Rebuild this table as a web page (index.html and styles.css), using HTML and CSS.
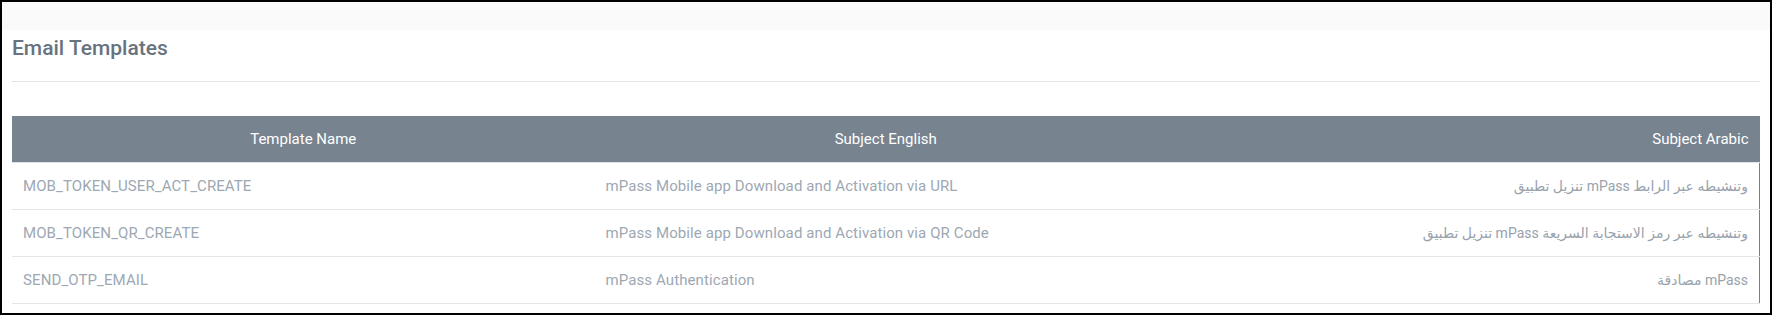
FILE: index.html
```html
<!DOCTYPE html>
<html lang="en">
<head>
<meta charset="utf-8">
<title>Email Templates</title>
<link rel="stylesheet" href="styles.css">
</head>
<body>
<div class="frame">
  <div class="topbar"></div>
  <div class="content">
    <h1 class="title">Email Templates</h1>
    <div class="divider"></div>
    <table class="grid">
      <thead>
        <tr>
          <th>Template Name</th>
          <th>Subject English</th>
          <th class="ar-head">Subject Arabic</th>
        </tr>
      </thead>
      <tbody>
        <tr>
          <td>MOB_TOKEN_USER_ACT_CREATE</td>
          <td>mPass Mobile app Download and Activation via URL</td>
          <td class="ar">تنزيل تطبيق mPass وتنشيطه عبر الرابط</td>
        </tr>
        <tr>
          <td>MOB_TOKEN_QR_CREATE</td>
          <td>mPass Mobile app Download and Activation via QR Code</td>
          <td class="ar">تنزيل تطبيق mPass وتنشيطه عبر رمز الاستجابة السريعة</td>
        </tr>
        <tr>
          <td>SEND_OTP_EMAIL</td>
          <td>mPass Authentication</td>
          <td class="ar">مصادقة mPass</td>
        </tr>
      </tbody>
    </table>
  </div>
</div>
</body>
</html>
```

FILE: styles.css
```css
html, body {
  margin: 0;
  padding: 0;
  background: #ffffff;
}

body {
  font-family: Roboto, "Noto Sans", "DejaVu Sans", sans-serif;
}

.frame {
  box-sizing: border-box;
  width: 1772px;
  height: 315px;
  border: 2px solid #000000;
  background: #ffffff;
  overflow: hidden;
}

.topbar {
  height: 28px;
  background: #fafafa;
}

.content {
  padding: 0 10px;
}

.title {
  margin: 6px 0 0;
  font-size: 21px;
  line-height: 24px;
  font-weight: 500;
  color: #67737f;
}

.divider {
  margin-top: 21px;
  border-top: 1px solid #e4e4e4;
}

.grid {
  width: 100%;
  margin-top: 34px;
  border-collapse: collapse;
  table-layout: fixed;
  font-size: 15px;
}

.grid th {
  height: 46px;
  padding: 0 11px;
  background: #77838f;
  color: #ffffff;
  font-weight: 400;
  text-align: center;
  border-bottom: 1px solid #dfe3e7;
}

.grid th.ar-head {
  text-align: right;
}

.grid td {
  height: 46px;
  padding: 0 11px;
  color: #9da8b3;
  letter-spacing: 0.1px;
  border-bottom: 1px solid #e3e6e9;
  white-space: nowrap;
}

.grid td.ar {
  text-align: right;
  font-size: 14px;
  letter-spacing: 0;
  color: #98a2ac;
  border-right: 1px solid #7d7d7d;
}
```
